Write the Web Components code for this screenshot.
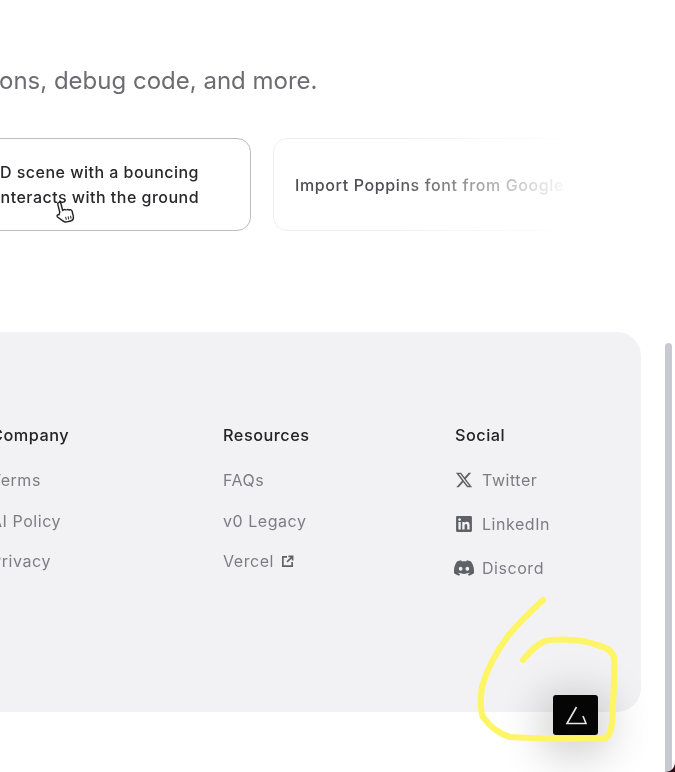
<!DOCTYPE html>
<html><head><meta charset="utf-8">
<style>
html,body{margin:0;height:772px;overflow:hidden;background:#fff}
body{font-family:Inter,"Liberation Sans",sans-serif}
</style></head>
<body>
<v-page>
  <v-tagline slot="tagline">ons, debug code, and more.</v-tagline>
  <prompt-card slot="cards" active><span>3D scene with a bouncing</span><br><span>interacts with the ground</span></prompt-card>
  <prompt-card slot="cards" faded>Import Poppins font from Google</prompt-card>
  <site-footer slot="footer">
    <footer-col title="Company">
      <footer-link>Terms</footer-link><footer-link>AI Policy</footer-link><footer-link>Privacy</footer-link>
    </footer-col>
    <footer-col title="Resources">
      <footer-link>FAQs</footer-link><footer-link>v0 Legacy</footer-link><footer-link external>Vercel</footer-link>
    </footer-col>
    <footer-col title="Social" wide>
      <footer-link icon="x">Twitter</footer-link><footer-link icon="linkedin">LinkedIn</footer-link><footer-link icon="discord">Discord</footer-link>
    </footer-col>
  </site-footer>
</v-page>
<script>
const ICONS={
x:'<path d="M18.244 2.25h3.308l-7.227 8.26 8.502 11.24H16.17l-5.214-6.817L4.99 21.75H1.68l7.73-8.835L1.254 2.25H8.08l4.713 6.231zm-1.161 17.52h1.833L7.084 4.126H5.117z"/>',
linkedin:'<path d="M20.447 20.452h-3.554v-5.569c0-1.328-.027-3.037-1.852-3.037-1.853 0-2.136 1.445-2.136 2.939v5.667H9.351V9h3.414v1.561h.046c.477-.9 1.637-1.85 3.37-1.85 3.601 0 4.267 2.37 4.267 5.455v6.286zM5.337 7.433c-1.144 0-2.063-.926-2.063-2.065 0-1.138.92-2.063 2.063-2.063 1.14 0 2.064.925 2.064 2.063 0 1.139-.925 2.065-2.064 2.065zm1.782 13.019H3.555V9h3.564v11.452zM22.225 0H1.771C.792 0 0 .774 0 1.729v20.542C0 23.227.792 24 1.771 24h20.451C23.2 24 24 23.227 24 22.271V1.729C24 .774 23.2 0 22.222 0h.003z"/>',
discord:'<path d="M20.317 4.3698a19.7913 19.7913 0 00-4.8851-1.5152.0741.0741 0 00-.0785.0371c-.211.3753-.4447.8648-.6083 1.2495-1.8447-.2762-3.68-.2762-5.4868 0-.1636-.3933-.4058-.8742-.6177-1.2495a.077.077 0 00-.0785-.037 19.7363 19.7363 0 00-4.8852 1.515.0699.0699 0 00-.0321.0277C.5334 9.0458-.319 13.5799.0992 18.0578a.0824.0824 0 00.0312.0561c2.0528 1.5076 4.0413 2.4228 5.9929 3.0294a.0777.0777 0 00.0842-.0276c.4616-.6304.8731-1.2952 1.226-1.9942a.076.076 0 00-.0416-.1057c-.6528-.2476-1.2743-.5495-1.8722-.8923a.077.077 0 01-.0076-.1277c.1258-.0943.2517-.1923.3718-.2914a.0743.0743 0 01.0776-.0105c3.9278 1.7933 8.18 1.7933 12.0614 0a.0739.0739 0 01.0785.0095c.1202.099.246.1981.3728.2924a.077.077 0 01-.0066.1276 12.2986 12.2986 0 01-1.873.8914.0766.0766 0 00-.0407.1067c.3604.698.7719 1.3628 1.225 1.9932a.076.076 0 00.0842.0286c1.961-.6067 3.9495-1.5219 6.0023-3.0294a.077.077 0 00.0313-.0552c.5004-5.177-.8382-9.6739-3.5485-13.6604a.061.061 0 00-.0312-.0286zM8.02 15.3312c-1.1825 0-2.1569-1.0857-2.1569-2.419 0-1.3332.9555-2.4189 2.157-2.4189 1.2108 0 2.1757 1.0952 2.1568 2.419 0 1.3332-.9555 2.4189-2.1569 2.4189zm7.9748 0c-1.1825 0-2.1569-1.0857-2.1569-2.419 0-1.3332.9554-2.4189 2.1569-2.4189 1.2108 0 2.1757 1.0952 2.1568 2.419 0 1.3332-.946 2.4189-2.1568 2.4189Z"/>'
};
function def(name,html,setup){
  customElements.define(name,class extends HTMLElement{
    constructor(){super();this.attachShadow({mode:'open'}).innerHTML=typeof html==='function'?html(this):html;}
    connectedCallback(){setup&&setup(this,this.shadowRoot);}
  });
}
def('v-page',`<style>
:host{display:block;position:relative;width:675px;height:772px;overflow:hidden;background:#fff;filter:blur(.45px)}
.main{display:flex;flex-direction:column;padding-top:66px}
.cards{display:flex;gap:22px;margin:42px 0 0 -120px}
.foot{margin:101px 0 0 -40px}
</style>
<div class="main">
<slot name="tagline"></slot>
<div class="cards"><slot name="cards"></slot></div>
<div class="foot"><slot name="footer"></slot></div>
</div>
<page-chrome></page-chrome>`);
def('v-tagline',`<style>:host{display:block;font-size:24px;line-height:30px;color:#6c6c72;white-space:nowrap;margin-left:-1px}</style><slot></slot>`);
def('prompt-card',`<style>
:host{display:flex;align-items:center;box-sizing:border-box;height:93px;flex:none;border-radius:14px;font-size:16px;letter-spacing:.48px;line-height:25px;font-weight:500;white-space:nowrap;color:#28282c}
:host([active]){width:371px;border:1.8px solid #bcbcc0;justify-content:flex-end;padding-right:51px;text-align:right;position:relative}
:host([faded]){width:330px;border:1.5px solid #efeff1;padding:2px 0 0 21px;letter-spacing:.62px;color:#4e4e53;-webkit-mask-image:linear-gradient(90deg,#000 0,#000 120px,transparent 300px);mask-image:linear-gradient(90deg,#000 0,#000 120px,transparent 300px)}
svg{position:absolute;left:174px;top:61px;transform:rotate(-14deg)}
</style><div><slot></slot></div>`,(el,root)=>{
  if(el.hasAttribute('active')&&!root.querySelector('svg')){
    root.innerHTML+=`<svg width="20" height="25" viewBox="0 0 20 25" fill="#fff" stroke="#222" stroke-width="1.4" stroke-linejoin="round"><path d="M5 11V2.8a1.6 1.6 0 0 1 3.2 0V10l1-.4c.9-.3 1.7 0 2 .5l1.6.1c.8 0 1.3.4 1.6.8 1.6-.2 2.8.4 2.8 2v4.5c0 2.6-1.4 4.6-4 4.6H9.5c-1.7 0-2.7-.7-3.6-2L1.6 15c-.8-1.3.8-2.7 2-1.7z"/><path d="M9.5 17v3M12 17v3M14.5 17v3" fill="none" stroke-width="1"/></svg>`;
  }
});
def('site-footer',`<style>
:host{display:grid;grid-template-columns:232px 232px 1fr;box-sizing:border-box;width:681px;height:380px;background:#f2f2f4;border-radius:24px;padding:92px 0 0 31px}
</style><slot></slot>`);
def('footer-col',el=>`<style>
:host{display:flex;flex-direction:column;align-items:flex-start}
h3{margin:0 0 22px;font-size:16.3px;letter-spacing:.5px;line-height:22px;font-weight:500;color:#222227;white-space:nowrap}
.l{display:flex;flex-direction:column;gap:${el.hasAttribute('wide')?'20':'16.5'}px}
</style><h3>${el.getAttribute('title')}</h3><div class="l"><slot></slot></div>`);
def('footer-link',el=>{
  const ic=el.getAttribute('icon');
  const lead=ic?`<svg class="i ${ic}" viewBox="0 0 24 24" fill="#606067">${ICONS[ic]}</svg>`:'';
  const ext=el.hasAttribute('external')?`<svg class="e" viewBox="0 0 14 14" fill="none" stroke="#606067" stroke-width="1.8"><path d="M6.5 2H2v10h10V7.5"/><path d="M6.5 7.5 12 2M8 1.5h4.5V6"/></svg>`:'';
  return `<style>
:host{display:flex;align-items:center;gap:${ic?'9':'7'}px;height:24px;font-size:16px;letter-spacing:.55px;color:#7c7c84;white-space:nowrap}
.i{width:18px;height:18px;flex:none}.e{width:13px;height:13px;flex:none}
.linkedin{transform:scale(.88)}.discord{transform:scale(1.12)}
</style>${lead}<slot></slot>${ext}`;
});
def('page-chrome',`<style>
:host{display:block;position:absolute;inset:0;pointer-events:none}
.bar{position:absolute;left:665px;top:343px;width:7px;height:429px;background:#c9c9d0;border-radius:4px 4px 0 0}
.corner{position:absolute;right:0;bottom:0}
.btn{position:absolute;left:553px;top:695px;width:45px;height:40px;background:#050505;border-radius:3px;box-shadow:0 10px 44px 10px rgba(0,0,0,.2);display:flex;align-items:center;justify-content:center}
.ink{position:absolute;left:0;top:0}
</style>
<div class="bar"></div>
<svg class="corner" width="10" height="10" viewBox="0 0 10 10"><path d="M10 0C10 6 6 10 0 10H10Z" fill="#2a0a14"/></svg>
<div class="btn"><svg width="24" height="22" viewBox="0 0 24 22" fill="none" stroke="#e6e6e6" stroke-width="1.6" stroke-linejoin="miter"><path d="M12.5 3 3 19.5H22L19 12"/></svg></div>
<svg class="ink" width="675" height="772" fill="none" stroke="#fdf565" stroke-width="6.2" stroke-linecap="round" stroke-linejoin="round"><path d="M543 600C530 612 517 625 508 636C496 652 487 668 482 687C480 700 480 710 483 717C490 727 500 734 510 737C540 739 580 739 606 738C610 735 611 730 612 723C613 700 615 680 614 657C612 652 609 649 603 647C590 642 582 640 573 640C560 639 550 639 543 642C535 646 530 652 523 660"/></svg>`);
</script>
</body></html>
